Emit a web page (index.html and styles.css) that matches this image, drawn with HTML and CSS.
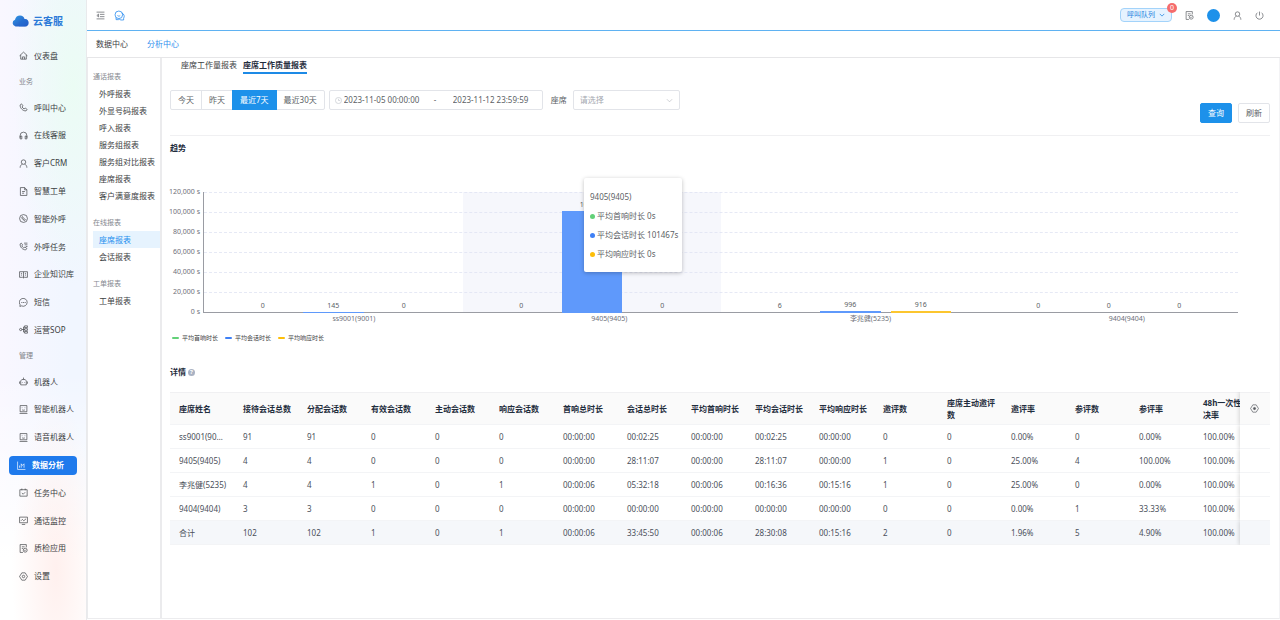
FILE: index.html
```html
<!DOCTYPE html>
<html lang="zh-CN">
<head>
<meta charset="UTF-8" />
<meta name="viewport" content="width=device-width, initial-scale=1" />
<title>云客服 - 座席工作质量报表</title>
<link rel="stylesheet" href="styles.css">
</head>
<body>
  <!-- icon sprite -->
  <svg class="sprite" aria-hidden="true">
    <symbol id="i-home" viewBox="0 0 16 16"><path d="M1 8.500 8 2l7 6.500M3 7v7.500h10V7M6 14.500v-4h4v4"/></symbol>
    <symbol id="i-phone" viewBox="0 0 16 16"><path d="M2 3.500 4.500 1.500 7 5 5.500 7c.8 1.500 2 2.700 3.500 3.500l2-1.500 3.500 2.500-2 2.500C7 14.500 1.500 9 2 3.500z"/></symbol>
    <symbol id="i-headset" viewBox="0 0 16 16"><path d="M2 12V8a6 6 0 0 1 12 0v4M2 9h3v5H2zM11 9h3v5h-3z"/></symbol>
    <symbol id="i-user" viewBox="0 0 16 16"><circle cx="8" cy="5.500" r="4"/><path d="M2 15.500c0-3.500 2-5.500 4-6.500M14 15.500c0-3.500-2-5.500-4-6.500"/></symbol>
    <symbol id="i-doc" viewBox="0 0 16 16"><path d="M2.500 1h7.500l4 4v10H2.500zM10 1v4h4M5.500 8h5M5.500 11h3.500"/></symbol>
    <symbol id="i-call" viewBox="0 0 16 16"><circle cx="8" cy="8" r="7"/><path d="M5 5.500 6 4.500l1.500 2-.8 1c.5.800 1 1.300 1.800 1.800l1-.8 2 1.500-1 1.300C8 11.500 4.800 8.500 5 5.500z"/></symbol>
    <symbol id="i-task" viewBox="0 0 16 16"><path d="M2 3.500 4 2l2.500 3L5 7c.8 1.500 2 2.700 3.500 3.500l2-1.500 3.500 2.500-2 2.500C6.500 14 1.500 9 2 3.500zM9 2h6M10 5h5M12 8h3"/></symbol>
    <symbol id="i-book" viewBox="0 0 16 16"><path d="M8 3v11M8 3H1v10h5.500L8 14l1.500-1H15V3zM3.500 6h2M3.500 9h2M10.500 6h2M10.500 9h2"/></symbol>
    <symbol id="i-sms" viewBox="0 0 16 16"><path d="M1.500 15 2 12a7 7 0 1 1 2.500 2z"/><path d="M4 8h2M7 8h2M10 8h2"/></symbol>
    <symbol id="i-flow" viewBox="0 0 16 16"><circle cx="3" cy="8" r="2"/><path d="M5 8h5M8 8V3.500h2M8 8v4.500h2"/><path d="M10 1.500h5v3h-5zM10 6.500h5v3h-5zM10 11.500h5v3h-5z"/></symbol>
    <symbol id="i-bot" viewBox="0 0 16 16"><path d="M8 1v3M5 4.500h6l2 2.500v7H3V7zM1 8v4M15 8v4M6 9v1M10 9v1"/></symbol>
    <symbol id="i-face" viewBox="0 0 16 16"><path d="M2 1h12v11H2zM5.500 4.500v1M10.500 4.500v1M5.500 8.500c1.500 1 3.500 1 5 0M1 15h14"/></symbol>
    <symbol id="i-chart" viewBox="0 0 16 16"><path d="M1 1v14h14M4.500 12V8M7.500 12V5l2 3 3-3v7"/></symbol>
    <symbol id="i-check" viewBox="0 0 16 16"><path d="M1.500 3h13v11.500h-13zM5 1v3M11 1v3M5 9l2.500 2L11 7.500"/></symbol>
    <symbol id="i-monitor" viewBox="0 0 16 16"><path d="M1 2h14v10H1zM5 15h6M3.500 8.500 6 6l2.500 2.500L12.500 5"/></symbol>
    <symbol id="i-audit" viewBox="0 0 16 16"><path d="M7 15H2V1h11v5M5 5h5M5 8h2"/><circle cx="11" cy="11" r="3.500"/><path d="m9.500 11 1.200 1 1.800-2"/></symbol>
    <symbol id="i-gear" viewBox="0 0 16 16"><path d="M5 1.500h6L15 8l-4 6.500H5L1 8z"/><circle cx="8" cy="8" r="2.200"/></symbol>
    <symbol id="i-fold" viewBox="0 0 16 16"><path d="M1 2h14M7 6h8M7 10h8M1 14h14M4.500 5.500v5L1.500 8z"/></symbol>
    <symbol id="i-chat" viewBox="0 0 16 16"><circle cx="7" cy="7" r="5.500"/><path d="M3 11v3h4M11.500 4.500A5 5 0 0 1 14 12v2.500h-4a5 5 0 0 1-3-2M5 8c1 1.200 3 1.200 4 0"/></symbol>
    <symbol id="i-power" viewBox="0 0 16 16"><path d="M8 1v7M4.500 3a6.300 6.300 0 1 0 7 0"/></symbol>
    <symbol id="i-down" viewBox="0 0 16 16"><path d="m2 5 6 6 6-6"/></symbol>
    <symbol id="i-clock" viewBox="0 0 16 16"><circle cx="8" cy="8" r="7"/><path d="M8 4v4h4"/></symbol>
    <symbol id="i-target" viewBox="0 0 16 16"><path d="M5 1.500h6L15 8l-4 6.500H5L1 8z"/><circle cx="8" cy="8" r="2" fill="currentColor"/></symbol>
  </svg>

  <div class="app">
    <aside class="sidebar">
      <div class="logo">
        <svg viewBox="0 0 34 24">
          <defs>
            <linearGradient id="cloud" x1="0" y1="0" x2="1" y2="1">
              <stop offset="0" stop-color="#2f9be8"/>
              <stop offset="1" stop-color="#2547b8"/>
            </linearGradient>
          </defs>
          <path fill="url(#cloud)" d="M7 23a7 7 0 0 1-1-13.500C7 4 11 1 16 1c5 0 8 3 9 7a7.500 7.500 0 0 1 1 15z"/>
          <path fill="#1f6fd6" d="M14 23c0-7 4-13 11-15a7.500 7.500 0 0 1 1 15z" opacity=".5"/>
        </svg>
        <span>云客服</span>
      </div>
      <nav class="menu">
        <a href="#"><svg class="icon"><use href="#i-home"/></svg>仪表盘</a>
        <h4>业务</h4>
        <a href="#"><svg class="icon"><use href="#i-phone"/></svg>呼叫中心</a>
        <a href="#"><svg class="icon"><use href="#i-headset"/></svg>在线客服</a>
        <a href="#"><svg class="icon"><use href="#i-user"/></svg>客户CRM</a>
        <a href="#"><svg class="icon"><use href="#i-doc"/></svg>智慧工单</a>
        <a href="#"><svg class="icon"><use href="#i-call"/></svg>智能外呼</a>
        <a href="#"><svg class="icon"><use href="#i-task"/></svg>外呼任务</a>
        <a href="#"><svg class="icon"><use href="#i-book"/></svg>企业知识库</a>
        <a href="#"><svg class="icon"><use href="#i-sms"/></svg>短信</a>
        <a href="#"><svg class="icon"><use href="#i-flow"/></svg>运营SOP</a>
        <h4>管理</h4>
        <a href="#"><svg class="icon"><use href="#i-bot"/></svg>机器人</a>
        <a href="#"><svg class="icon"><use href="#i-face"/></svg>智能机器人</a>
        <a href="#"><svg class="icon"><use href="#i-face"/></svg>语音机器人</a>
        <a href="#" class="active"><span><svg class="icon"><use href="#i-chart"/></svg>数据分析</span></a>
        <a href="#"><svg class="icon"><use href="#i-check"/></svg>任务中心</a>
        <a href="#"><svg class="icon"><use href="#i-monitor"/></svg>通话监控</a>
        <a href="#"><svg class="icon"><use href="#i-audit"/></svg>质检应用</a>
        <a href="#"><svg class="icon"><use href="#i-gear"/></svg>设置</a>
      </nav>
    </aside>

    <div class="main">
      <header class="topbar">
        <button class="icon-btn" aria-label="收起菜单"><svg class="icon"><use href="#i-fold"/></svg></button>
        <button class="icon-btn chat" aria-label="消息"><svg class="icon"><use href="#i-chat"/></svg></button>
        <div class="tools">
          <button class="queue">呼叫队列<svg class="icon"><use href="#i-down"/></svg><span class="badge">0</span></button>
          <button class="icon-btn" aria-label="质检"><svg class="icon"><use href="#i-audit"/></svg></button>
          <span class="avatar"></span>
          <button class="icon-btn" aria-label="用户"><svg class="icon"><use href="#i-user"/></svg></button>
          <button class="icon-btn" aria-label="退出"><svg class="icon"><use href="#i-power"/></svg></button>
        </div>
      </header>
      <nav class="page-tabs">
        <a href="#">数据中心</a>
        <a href="#" class="active">分析中心</a>
      </nav>

      <div class="workspace">
        <nav class="submenu">
          <h5>通话报表</h5>
          <a href="#">外呼报表</a>
          <a href="#">外显号码报表</a>
          <a href="#">呼入报表</a>
          <a href="#">服务组报表</a>
          <a href="#">服务组对比报表</a>
          <a href="#">座席报表</a>
          <a href="#">客户满意度报表</a>
          <h5>在线报表</h5>
          <a href="#" class="active">座席报表</a>
          <a href="#">会话报表</a>
          <h5>工单报表</h5>
          <a href="#">工单报表</a>
        </nav>

        <main class="content">
          <nav class="report-tabs">
            <a href="#">座席工作量报表</a>
            <a href="#" class="active">座席工作质量报表</a>
          </nav>

          <form class="filters">
            <div class="btn-group">
              <button type="button">今天</button>
              <button type="button">昨天</button>
              <button type="button" class="active">最近7天</button>
              <button type="button">最近30天</button>
            </div>
            <div class="date-range">
              <svg class="icon"><use href="#i-clock"/></svg>
              <input type="text" class="start" aria-label="开始时间" value="2023-11-05 00:00:00">
              <span>-</span>
              <input type="text" aria-label="结束时间" value="2023-11-12 23:59:59">
            </div>
            <label for="agent">座席</label>
            <div class="select">
              <select id="agent"><option>请选择</option></select>
              <svg class="icon"><use href="#i-down"/></svg>
            </div>
            <div class="actions">
              <button type="button" class="btn primary">查询</button>
              <button type="button" class="btn">刷新</button>
            </div>
          </form>

          <h3 class="title">趋势</h3>
          <section class="chart">
            <div class="y-axis">
              <span>120,000 s</span>
              <span>100,000 s</span>
              <span>80,000 s</span>
              <span>60,000 s</span>
              <span>40,000 s</span>
              <span>20,000 s</span>
              <span>0 s</span>
            </div>
            <div class="plot">
              <div class="grid-lines"><i></i><i></i><i></i><i></i><i></i><i></i></div>
              <div class="bars">
                <div class="category">
                  <div class="bar"><b>0</b></div>
                  <div class="bar blue"><b>145</b><i style="height: 0.12%"></i></div>
                  <div class="bar"><b>0</b></div>
                </div>
                <div class="category hover">
                  <div class="bar"><b>0</b></div>
                  <div class="bar blue"><b>101467</b><i style="height: 84.56%"></i></div>
                  <div class="bar"><b>0</b></div>
                  <div class="tooltip">
                    <p>9405(9405)</p>
                    <p><i class="dot green"></i>平均首响时长 0s</p>
                    <p><i class="dot blue"></i>平均会话时长 101467s</p>
                    <p><i class="dot yellow"></i>平均响应时长 0s</p>
                  </div>
                </div>
                <div class="category">
                  <div class="bar"><b>6</b></div>
                  <div class="bar blue"><b>996</b><i style="height: 0.83%"></i></div>
                  <div class="bar yellow"><b>916</b><i style="height: 0.76%"></i></div>
                </div>
                <div class="category">
                  <div class="bar"><b>0</b></div>
                  <div class="bar"><b>0</b></div>
                  <div class="bar"><b>0</b></div>
                </div>
              </div>
            </div>
            <div class="x-axis">
              <span>ss9001(9001)</span>
              <span>9405(9405)</span>
              <span>李兆健(5235)</span>
              <span>9404(9404)</span>
            </div>
          </section>
          <div class="legend">
            <span><i class="green"></i>平均首响时长</span>
            <span><i class="blue"></i>平均会话时长</span>
            <span><i class="yellow"></i>平均响应时长</span>
          </div>

          <h3 class="title detail">详情<span class="help">?</span></h3>
          <div class="table-wrap">
            <table>
              <thead>
                <tr>
                  <th>座席姓名</th><th>接待会话总数</th><th>分配会话数</th><th>有效会话数</th><th>主动会话数</th><th>响应会话数</th>
                  <th>首响总时长</th><th>会话总时长</th><th>平均首响时长</th><th>平均会话时长</th><th>平均响应时长</th><th>邀评数</th>
                  <th>座席主动邀评数</th><th>邀评率</th><th>参评数</th><th>参评率</th><th>48h一次性解决率</th>
                  <th class="fixed"><button type="button" class="icon-btn" aria-label="列设置"><svg class="icon"><use href="#i-target"/></svg></button></th>
                </tr>
              </thead>
              <tbody>
                <tr>
                  <td>ss9001(9001)</td><td>91</td><td>91</td><td>0</td><td>0</td><td>0</td>
                  <td>00:00:00</td><td>00:02:25</td><td>00:00:00</td><td>00:02:25</td><td>00:00:00</td><td>0</td>
                  <td>0</td><td>0.00%</td><td>0</td><td>0.00%</td><td>100.00%</td><td class="fixed"></td>
                </tr>
                <tr>
                  <td>9405(9405)</td><td>4</td><td>4</td><td>0</td><td>0</td><td>0</td>
                  <td>00:00:00</td><td>28:11:07</td><td>00:00:00</td><td>28:11:07</td><td>00:00:00</td><td>1</td>
                  <td>0</td><td>25.00%</td><td>4</td><td>100.00%</td><td>100.00%</td><td class="fixed"></td>
                </tr>
                <tr>
                  <td>李兆健(5235)</td><td>4</td><td>4</td><td>1</td><td>0</td><td>1</td>
                  <td>00:00:06</td><td>05:32:18</td><td>00:00:06</td><td>00:16:36</td><td>00:15:16</td><td>1</td>
                  <td>0</td><td>25.00%</td><td>0</td><td>0.00%</td><td>100.00%</td><td class="fixed"></td>
                </tr>
                <tr>
                  <td>9404(9404)</td><td>3</td><td>3</td><td>0</td><td>0</td><td>0</td>
                  <td>00:00:00</td><td>00:00:00</td><td>00:00:00</td><td>00:00:00</td><td>00:00:00</td><td>0</td>
                  <td>0</td><td>0.00%</td><td>1</td><td>33.33%</td><td>100.00%</td><td class="fixed"></td>
                </tr>
              </tbody>
              <tfoot>
                <tr>
                  <td>合计</td><td>102</td><td>102</td><td>1</td><td>0</td><td>1</td>
                  <td>00:00:06</td><td>33:45:50</td><td>00:00:06</td><td>28:30:08</td><td>00:15:16</td><td>2</td>
                  <td>0</td><td>1.96%</td><td>5</td><td>4.90%</td><td>100.00%</td><td class="fixed"></td>
                </tr>
              </tfoot>
            </table>
          </div>
        </main>
      </div>
    </div>
  </div>
</body>
</html>
```

FILE: styles.css
```css
* {
    box-sizing: border-box;
}
body {
    margin: 0;
    font-family: "Noto Sans", "Noto Sans CJK SC", sans-serif;
    font-size: 8px;
    line-height: 12px;
    color: #3c3e42;
    background-color: #ffffff;
}
a {
    color: inherit;
    text-decoration: none;
}
button, input, select {
    font: inherit;
    color: inherit;
}
button {
    cursor: pointer;
}
h3, h4, h5, p {
    margin: 0;
}
.sprite {
    display: none;
}
.icon {
    width: 9px;
    height: 9px;
    flex: none;
    fill: none;
    stroke: currentColor;
    stroke-width: 1.2;
}
.icon-btn {
    display: flex;
    padding: 0;
    border: none;
    background: none;
    color: #55585e;
}
.app {
    display: flex;
    min-height: 100vh;
}

/* Sidebar */
.sidebar {
    width: 86px;
    flex: none;
    display: flex;
    flex-direction: column;
    padding-bottom: 30px;
    background:
        radial-gradient(ellipse 60px 200px at 85% 14%, #ebfcf4, transparent),
        radial-gradient(ellipse 44px 170px at 65% 92%, #fff0ee, transparent),
        linear-gradient(transparent 60%, #ffffff 90%),
        linear-gradient(90deg, #f9f7ff, #f1f6ff 80%);
}
.logo {
    display: flex;
    align-items: center;
    gap: 4px;
    height: 42px;
    padding-left: 12px;
    font-size: 10px;
    font-weight: bold;
    color: #2c7bd8;
}
.logo svg {
    width: 17px;
    height: 12px;
}
.menu {
    flex: 1;
    display: flex;
    flex-direction: column;
}
.menu a {
    flex: 1;
    display: flex;
    align-items: center;
    gap: 6px;
    padding-left: 19px;
    white-space: nowrap;
}
.menu h4 {
    height: 24px;
    padding-left: 19px;
    font-size: 7px;
    font-weight: normal;
    line-height: 24px;
    color: #808388;
}
.menu a.active {
    padding: 0 9px;
}
.menu a.active span {
    flex: 1;
    display: flex;
    align-items: center;
    gap: 6px;
    height: 19px;
    padding-left: 8px;
    border-radius: 4px;
    background-color: #1f7aec;
    color: #ffffff;
    font-weight: bold;
}

/* Top bar */
.main {
    flex: 1;
    min-width: 0;
    display: flex;
    flex-direction: column;
    border-left: 1px solid #e9eaec;
    padding-bottom: 1px;
}
.topbar {
    display: flex;
    align-items: center;
    gap: 9px;
    height: 31px;
    padding: 0 16px 0 9px;
    border-bottom: 1px solid #5fb2f2;
}
.topbar .chat {
    color: #2e8ff0;
}
.topbar .chat .icon {
    width: 11px;
    height: 11px;
}
.tools {
    display: flex;
    align-items: center;
    gap: 13px;
    margin-left: auto;
}
.queue {
    position: relative;
    display: flex;
    align-items: center;
    gap: 4px;
    height: 14px;
    padding: 0 6px;
    border: 1px solid #a3d3fa;
    border-radius: 4px;
    background-color: #e6f3ff;
    color: #1d84e0;
    font-size: 7px;
}
.queue .icon {
    width: 6px;
    height: 6px;
    stroke-width: 2;
}
.badge {
    position: absolute;
    top: -6px;
    right: -6px;
    width: 10px;
    height: 10px;
    border-radius: 5px;
    background-color: #f56c6c;
    color: #ffffff;
    font-size: 7px;
    line-height: 10px;
    text-align: center;
}
.avatar {
    width: 13px;
    height: 13px;
    border-radius: 50%;
    background-color: #1d91ea;
}
.page-tabs {
    display: flex;
    gap: 19px;
    height: 27px;
    padding-left: 9px;
    border-bottom: 1px solid #e6e6e8;
    line-height: 26px;
}
.page-tabs .active {
    color: #2f8fee;
}

/* Submenu */
.workspace {
    flex: 1;
    display: flex;
    border-bottom: 1px solid #ececee;
    border-right: 1px solid #f3f3f5;
}
.submenu {
    width: 75px;
    flex: none;
    padding: 10px 0 0 5px;
    border: solid #ebebed;
    border-width: 0 2px 0 1px;
    line-height: 17px;
    white-space: nowrap;
}
.submenu h5 {
    font-size: 7px;
    font-weight: normal;
    color: #86898f;
}
.submenu a + h5 {
    margin-top: 10px;
}
.submenu a {
    display: block;
    padding-left: 6px;
}
.submenu .active {
    background-color: #e6f3fe;
    color: #1d8fee;
}

/* Filters */
.content {
    flex: 1;
    min-width: 0;
    padding: 0 9px 0 8px;
}
.report-tabs {
    display: flex;
    gap: 6px;
    padding-left: 11px;
    line-height: 14px;
}
.report-tabs .active {
    border-bottom: 2px solid #1d8ae6;
    font-weight: bold;
    color: #1f2d3d;
}
.filters {
    display: flex;
    align-items: flex-start;
    padding: 16px 0 12px;
    border-bottom: 1px solid #f0f0f2;
    color: #5c5f66;
}
.btn-group {
    display: flex;
    margin-right: 4px;
}
.btn-group button {
    height: 20px;
    padding: 0 7px;
    border: 1px solid #e2e4e9;
    background-color: #ffffff;
}
.btn-group button + button {
    margin-left: -1px;
}
.btn-group button:first-child {
    border-radius: 2px 0 0 2px;
}
.btn-group button:last-child {
    border-radius: 0 2px 2px 0;
}
.btn-group .active {
    position: relative;
    border-color: #1d91ea;
    background-color: #1d91ea;
    color: #ffffff;
}
.date-range {
    display: flex;
    align-items: center;
    width: 214px;
    height: 20px;
    padding: 0 5px;
    border: 1px solid #e2e4e9;
    border-radius: 2px;
}
.date-range .icon {
    width: 7px;
    height: 7px;
    color: #b4b8bf;
}
.date-range input {
    flex: 1;
    min-width: 0;
    padding: 0 2px;
    border: none;
    background: none;
    outline: none;
}
.date-range .start {
    flex: 0 0 92px;
}
.date-range span {
    width: 17px;
}
.filters label {
    padding: 0 6px 0 8px;
    line-height: 20px;
}
.select {
    position: relative;
    width: 107px;
}
.select select {
    display: block;
    width: 100%;
    height: 20px;
    padding: 0 6px;
    border: 1px solid #e2e4e9;
    border-radius: 2px;
    background-color: #ffffff;
    color: #a4a8b0;
    appearance: none;
}
.select .icon {
    position: absolute;
    top: 7px;
    right: 7px;
    width: 7px;
    height: 7px;
    color: #a4a8b0;
    pointer-events: none;
}
.actions {
    display: flex;
    gap: 6px;
    margin: 13px 0 0 auto;
}
.btn {
    height: 20px;
    padding: 0 7px;
    border: 1px solid #e2e4e9;
    border-radius: 2px;
    background-color: #ffffff;
}
.btn.primary {
    border-color: #1d91ea;
    background-color: #1d91ea;
    color: #ffffff;
}
.title {
    margin-top: 4px;
    font-size: 8px;
    line-height: 16px;
    color: #1f2d3d;
}

/* Chart */
.chart {
    display: grid;
    grid-template-columns: 33px 1fr;
    margin: 26px 32px 0 0;
    font-size: 7px;
    color: #6e7079;
}
.y-axis {
    grid-row: 1 / 3;
    display: flex;
    flex-direction: column;
    padding-right: 3px;
    line-height: 20px;
    white-space: nowrap;
}
.y-axis span {
    align-self: flex-end;
}
.plot {
    display: grid;
    margin-top: 10px;
    height: 121px;
    border: solid #9a9ca3;
    border-width: 0 0 1px 1px;
}
.grid-lines, .bars {
    grid-area: 1 / 1;
}
.grid-lines {
    display: flex;
    flex-direction: column;
}
.grid-lines i {
    flex: 1;
    border-top: 1px dashed #e6e9f5;
}
.bars, .x-axis {
    display: grid;
    grid-template-columns: repeat(4, 1fr);
}
.category {
    position: relative;
    display: flex;
    gap: 5%;
    padding: 0 11%;
}
.category.hover {
    background-color: rgba(225, 230, 245, 0.3);
}
.bar {
    flex: 1;
    min-width: 0;
    display: flex;
    flex-direction: column;
    justify-content: flex-end;
    align-items: center;
}
.bar b {
    margin-bottom: 1px;
    font-weight: normal;
    line-height: 10px;
    color: #5c5f66;
}
/* bars run down over the axis line */
.bar i {
    box-sizing: content-box;
    width: 100%;
    flex: none;
    margin-bottom: -1px;
    padding-bottom: 1px;
}
.bar.blue i {
    background-color: #5f99fb;
}
.bar.yellow i {
    background-color: #fcc62f;
}
.tooltip {
    position: absolute;
    z-index: 2;
    top: -14px;
    left: 47%;
    padding: 9px 4px 9px 6px;
    border-radius: 2px;
    background-color: #ffffff;
    box-shadow: 0 1px 4px rgba(0, 0, 0, 0.25);
    font-size: 8px;
    line-height: 19px;
    color: #5c5f66;
    white-space: nowrap;
}
.dot {
    display: inline-block;
    width: 5px;
    height: 5px;
    margin-right: 2px;
    border-radius: 50%;
}
.dot.green, .legend .green {
    background-color: #62d178;
}
.dot.blue, .legend .blue {
    background-color: #3f80f5;
}
.dot.yellow, .legend .yellow {
    background-color: #fdbe08;
}
.x-axis {
    grid-column: 2;
}
.x-axis span {
    padding-left: 50%;
}
.legend {
    display: flex;
    gap: 7px;
    margin-top: 7px;
    padding: 0 2px;
    font-size: 6px;
}
.legend span {
    display: flex;
    align-items: center;
    gap: 3px;
}
.legend i {
    width: 7px;
    height: 2px;
    border-radius: 1px;
}

/* Detail table */
.detail {
    display: flex;
    align-items: center;
    gap: 2px;
    margin-top: 20px;
}
.help {
    width: 7px;
    height: 7px;
    border-radius: 50%;
    background-color: #a9b2c3;
    color: #ffffff;
    font-size: 6px;
    line-height: 7px;
    text-align: center;
}
.table-wrap {
    margin-top: 12px;
    overflow-x: auto;
    scrollbar-width: none;
}
table {
    width: 1118px;
    table-layout: fixed;
    border-collapse: separate;
    border-spacing: 0;
}
th, td {
    padding: 0 7px 0 9px;
    border-bottom: 1px solid #f3f4f6;
    text-align: left;
}
th {
    height: 33px;
    border-top: 1px solid #f0f0f2;
    background-color: #fafafa;
    color: #1f2d3d;
}
td {
    height: 24px;
    overflow: hidden;
    background-color: #ffffff;
    color: #4a4f5a;
    text-overflow: ellipsis;
    white-space: nowrap;
}
tfoot td {
    background-color: #f5f7fa;
}
.fixed {
    position: sticky;
    right: 0;
    width: 30px;
    padding: 0 10px;
    box-shadow: -1px 0 4px rgba(0, 0, 0, 0.15);
    clip-path: inset(0 0 0 -6px);
}
```
